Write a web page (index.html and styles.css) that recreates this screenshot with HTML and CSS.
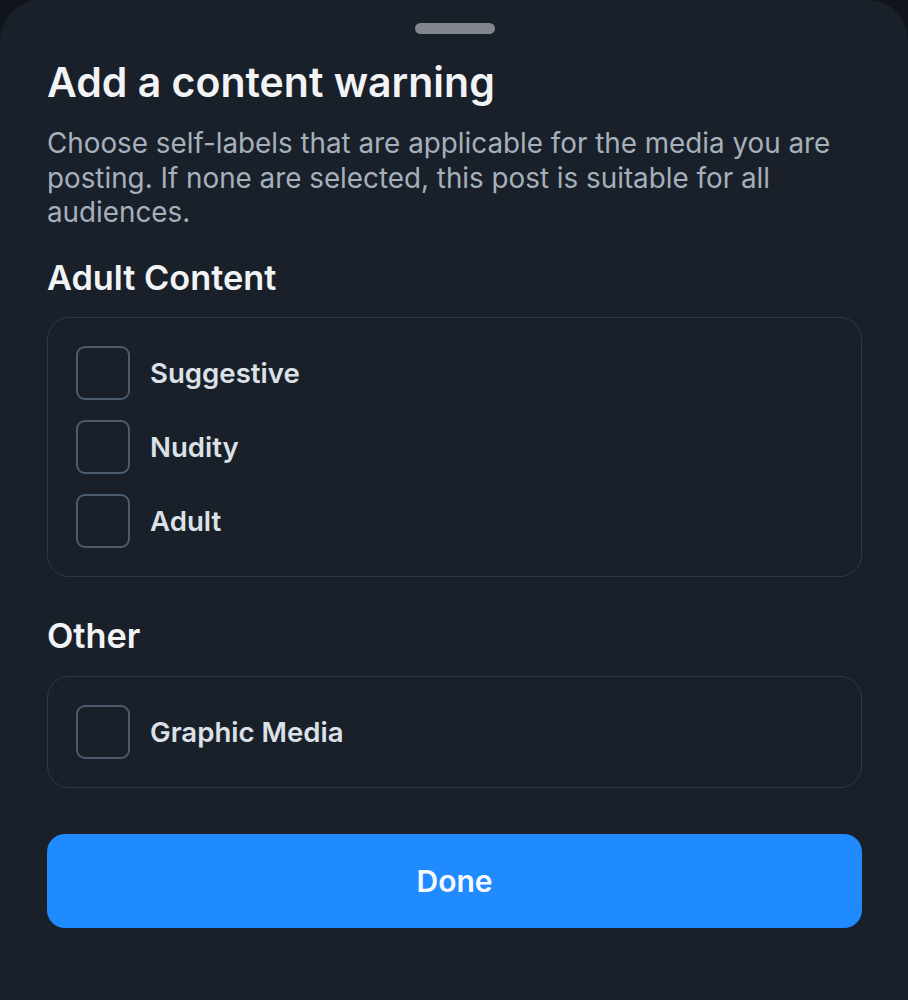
FILE: index.html
```html
<!DOCTYPE html>
<html lang="en">
<head>
<meta charset="utf-8">
<title>Add a content warning</title>
<link rel="stylesheet" href="styles.css">
</head>
<body>
<div class="sheet">
  <div class="handle"></div>
  <h1 class="title">Add a content warning</h1>
  <p class="desc">Choose self-labels that are applicable for the media you are posting. If none are selected, this post is suitable for all audiences.</p>

  <h2 class="section-title">Adult Content</h2>
  <div class="group">
    <label class="option"><span class="box"></span><span class="label">Suggestive</span></label>
    <label class="option"><span class="box"></span><span class="label">Nudity</span></label>
    <label class="option"><span class="box"></span><span class="label">Adult</span></label>
  </div>

  <h2 class="section-title other">Other</h2>
  <div class="group">
    <label class="option"><span class="box"></span><span class="label">Graphic Media</span></label>
  </div>

  <button class="done">Done</button>
</div>
</body>
</html>
```

FILE: styles.css
```css
html, body {
  margin: 0;
  padding: 0;
  background: #10151c;
  height: 100%;
}
body {
  font-family: Inter, "Noto Sans", "Liberation Sans", sans-serif;
  overflow: hidden;
}
.sheet {
  box-sizing: border-box;
  min-height: 1000px;
  margin: 0;
  background: #19202a;
  border-radius: 40px 40px 0 0;
  padding: 23px 46px 40px 47px;
  display: flex;
  flex-direction: column;
}
.handle {
  align-self: center;
  width: 80px;
  height: 11px;
  border-radius: 6px;
  background: #80858e;
}
.title {
  margin: 24px 0 0;
  font-size: 41px;
  line-height: 48px;
  font-weight: 600;
  color: #f1f3f5;
  letter-spacing: 0;
}
.desc {
  margin: 20px 0 0;
  font-size: 27.8px;
  line-height: 34.5px;
  font-weight: 400;
  color: #a6b0bb;
}
.section-title {
  margin: 28px 0 0;
  font-size: 34.3px;
  line-height: 40px;
  font-weight: 600;
  color: #f1f3f5;
}
.section-title.other {
  margin-top: 39px;
}
.group {
  margin-top: 19px;
  border: 1px solid #2f3845;
  border-radius: 22px;
  padding: 28px 28px;
  display: flex;
  flex-direction: column;
  gap: 20px;
}
.other + .group {
  margin-top: 20px;
}
.option {
  display: flex;
  align-items: center;
  gap: 20px;
}
.box {
  box-sizing: border-box;
  width: 54px;
  height: 54px;
  border: 2px solid #4c5c6e;
  border-radius: 9px;
}
.label {
  font-size: 27.6px;
  font-weight: 600;
  color: #dce1e7;
}
.done {
  margin-top: 46px;
  height: 94px;
  border: none;
  border-radius: 18px;
  background: #208bfe;
  color: #f6f9ff;
  font-family: inherit;
  font-size: 30px;
  font-weight: 600;
}
```
